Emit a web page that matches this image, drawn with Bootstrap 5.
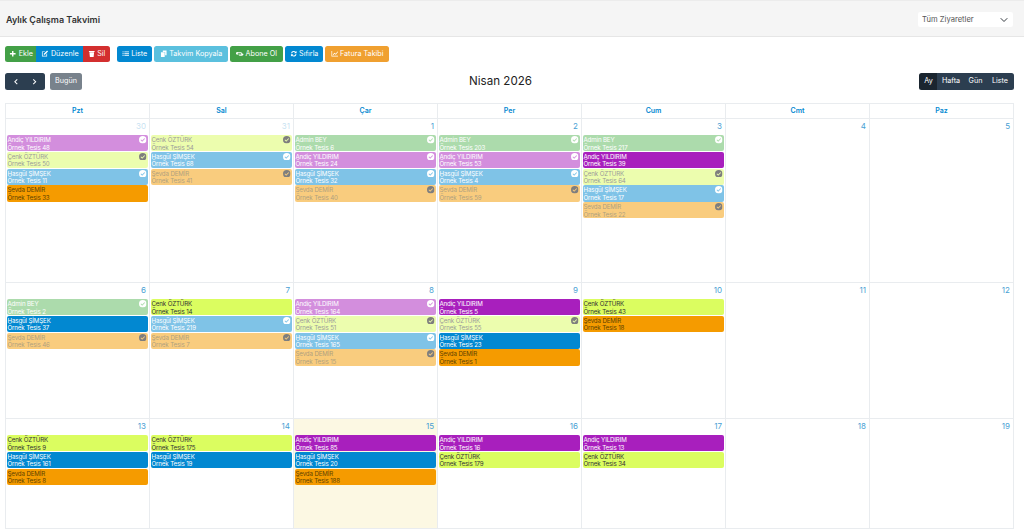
<!DOCTYPE html>
<html lang="tr">
<head>
  <meta charset="UTF-8" />
  <meta name="viewport" content="width=device-width, initial-scale=1" />
  <title>Aylık Çalışma Takvimi</title>
  <link href="https://cdn.jsdelivr.net/npm/bootstrap@5.3.3/dist/css/bootstrap.min.css" rel="stylesheet" />
  <style>
    html, body { height: 531px; overflow: hidden; }
    body { font-family: Inter, "Liberation Sans", sans-serif; background: #fff; color: #333; }
    .top-bar { height: 37px; background: #f5f5f5; border-top: 1px solid #ececec; border-bottom: 1px solid #e6e6e6; padding: 0 11px 0 6px; }
    .top-title { font-size: 9px; font-weight: 600; color: #333; margin: 4px 0 0; }
    .visit-select { width: 95px; height: 15px; min-height: 0; padding: 0 4px; border: 0; border-radius: 2px; font-size: 7.6px; color: #555; background-size: 8px 8px; background-position: right 5px center; margin-top: 2px; }
    .page-body { padding: 9px 10px 0 5px; }
    .tool-row { gap: 2px; height: 16px; }
    .tool-row .btn-group { margin-right: 5px; }
    .tbtn { font-size: 7.2px; font-weight: 400; color: #fff; border: 0; border-radius: 2.5px; height: 16px; padding: 0; display: inline-flex; align-items: center; justify-content: center; gap: 2px; }
    .tbtn svg { width: 7.5px; height: 7.5px; fill: #fff; flex: none; }
    .tbtn:hover { color: #fff; }
    .c-green { background: #43a047; } .c-blue { background: #0288d1; } .c-red { background: #d32f2f; }
    .c-cyan { background: #5bc0de; } .c-orange { background: #f0a030; } .c-navy { background: #2c3e50; } .c-grey { background: #78828c; }
    .c-dark { background: #1a252f; }
    .w-ekle { width: 32px; } .w-duz { width: 48px; } .w-sil { width: 27px; } .w-lis { width: 35px; } .w-kop { width: 74px; }
    .w-abo { width: 53px; } .w-sif { width: 38px; } .w-fat { width: 64px; }
    .cal-head { height: 17px; margin-top: 11px; }
    .cal-head .tbtn { height: 17px; }
    .w-arrow { width: 20.500px; } .w-bug { width: 32px; margin-left: 5px; }
    .w-ay { width: 19px; } .w-haf { width: 28px; } .w-gun { width: 23px; } .w-lst { width: 28px; }
    .cal-title { font-size: 11.6px; font-weight: 400; color: #222; margin: 0; }
    .cal-grid { display: grid; grid-template-columns: repeat(7, 1fr); grid-template-rows: 15px 164px 136px 110px; margin-top: 13px; border-top: 1px solid #e9ecef; border-left: 1px solid #e9ecef; }
    .gh, .gc { border-right: 1px solid #e9ecef; border-bottom: 1px solid #e9ecef; min-width: 0; }
    .gh { font-size: 7px; font-weight: 600; color: #0288d1; text-align: center; line-height: 14px; }
    .gc { padding: 0 1px 0 .5px; }
    .gc-today { background: #fcf8e3; }
    .day-no { font-size: 8px; line-height: 10px; color: #4a9fd4; text-align: right; padding: 2px 2px 4px 0; height: 16px; }
    .day-off { opacity: .3; }
    .ev { position: relative; height: 16.2px; margin-bottom: .6px; border-radius: 2px; font-size: 6.2px; letter-spacing: -.15px; line-height: 7.7px; padding: 1px 1px 0; white-space: nowrap; overflow: hidden; }
    .ev-done { opacity: .5; }
    .ev-and { background: #a81fbd; color: #fff; }
    .ev-cen { background: #dbfd60; color: #333; }
    .ev-has { background: #0288d1; color: #fff; }
    .ev-sev { background: #f59b00; color: #5d4200; }
    .ev-adm { background: #5cb85c; color: #fff; }
    .ev-ok { position: absolute; top: 1px; right: 1.5px; width: 7.5px; height: 7.5px; fill: #fff; }
    .ev-cen .ev-ok, .ev-sev .ev-ok { fill: #000; }
  </style>
</head>
<body>

<svg class="d-none">
  <symbol id="ok" viewBox="0 0 16 16"><path fill-rule="evenodd" d="M8 0a8 8 0 1 1 0 16A8 8 0 0 1 8 0zm3.6 4.6L6.8 9.4 4.6 7.2 3.2 8.6l3.6 3.6 6.2-6.2z"/></symbol>
</svg>

<!-- Ust bar -->
<div class="top-bar d-flex justify-content-between align-items-center">
  <h1 class="top-title">Aylık Çalışma Takvimi</h1>
  <select class="form-select visit-select"><option>Tüm Ziyaretler</option></select>
</div>

<div class="page-body">
  <!-- Araclar -->
  <div class="tool-row d-flex">
    <div class="btn-group">
      <button class="btn tbtn c-green w-ekle"><svg viewBox="0 0 16 16"><path d="M6.5 2h3v4.500H14v3H9.500V14h-3V9.500H2v-3h4.500z"/></svg>Ekle</button>
      <button class="btn tbtn c-blue w-duz"><svg viewBox="0 0 16 16"><path d="M2 3h7L7.500 4.500h-4v8h8v-4L13 7v7H2zM13 1l2 2-7 7H6V8z"/></svg>Düzenle</button>
      <button class="btn tbtn c-red w-sil"><svg viewBox="0 0 16 16"><path d="M2 2h12v2H2zM3 5h10l-1 10H4z"/></svg>Sil</button>
    </div>
    <button class="btn tbtn c-blue w-lis"><svg viewBox="0 0 16 16"><path d="M1 3h2.500v2H1zM5 3h10v2H5zM1 7h2.500v2H1zM5 7h10v2H5zM1 11h2.500v2H1zM5 11h10v2H5z"/></svg>Liste</button>
    <button class="btn tbtn c-cyan w-kop"><svg viewBox="0 0 16 16"><path d="M6 1h8v10h-3V4H6zM2 5h8v10H2z"/></svg>Takvim Kopyala</button>
    <button class="btn tbtn c-green w-abo"><svg viewBox="0 0 16 16"><path fill-rule="evenodd" d="M5 5h5a3.500 3.500 0 0 1 3.300 2.300A3.500 3.500 0 0 1 16 8.500a3.500 3.500 0 0 1-3.500 3.500H8a3.500 3.500 0 0 1-3.300-2.300A3.500 3.500 0 0 1 0 8a3 3 0 0 1 5-3zm0 1.800a1.500 1.500 0 0 0 0 3h5a1.500 1.500 0 0 0 0-3z"/></svg>Abone Ol</button>
    <button class="btn tbtn c-blue w-sif"><svg viewBox="0 0 16 16"><path d="M8 2a6 6 0 0 1 4.200 1.700L14 2v5H9l1.700-1.700A3.700 3.700 0 0 0 4.500 7H2.100A6 6 0 0 1 8 2zM2 9h5l-1.700 1.700A3.700 3.700 0 0 0 11.500 9h2.400A6 6 0 0 1 3.800 12.300L2 14z"/></svg>Sıfırla</button>
    <button class="btn tbtn c-orange w-fat"><svg viewBox="0 0 16 16"><path d="M1 2h1.500v10.500H15V14H1zM4 10l3-4 3 2 4-5 1 1-4.700 6-3-2-2.300 3z"/></svg>Fatura Takibi</button>
  </div>

  <!-- Takvim basligi -->
  <div class="cal-head d-flex justify-content-between align-items-center">
    <div class="d-flex">
      <div class="btn-group">
        <button class="btn tbtn c-navy w-arrow" aria-label="Önceki"><svg viewBox="0 0 16 16"><path d="M10.500 2 12 3.500 7.500 8l4.500 4.500-1.500 1.500-6-6z"/></svg></button>
        <button class="btn tbtn c-navy w-arrow" aria-label="Sonraki"><svg viewBox="0 0 16 16"><path d="M5.500 2 4 3.500 8.500 8 4 12.500 5.500 14l6-6z"/></svg></button>
      </div>
      <button class="btn tbtn c-grey w-bug">Bugün</button>
    </div>
    <h2 class="cal-title">Nisan 2026</h2>
    <div class="btn-group">
      <button class="btn tbtn c-dark w-ay">Ay</button>
      <button class="btn tbtn c-navy w-haf">Hafta</button>
      <button class="btn tbtn c-navy w-gun">Gün</button>
      <button class="btn tbtn c-navy w-lst">Liste</button>
    </div>
  </div>

  <!-- Takvim -->
  <div class="cal-grid">
    <div class="gh">Pzt</div><div class="gh">Sal</div><div class="gh">Çar</div><div class="gh">Per</div><div class="gh">Cum</div><div class="gh">Cmt</div><div class="gh">Paz</div>

    <div class="gc">
      <div class="day-no day-off">30</div>
      <div class="ev ev-and ev-done">Andiç YILDIRIM<br>Örnek Tesis 48<svg class="ev-ok"><use href="#ok"/></svg></div>
      <div class="ev ev-cen ev-done">Cenk ÖZTÜRK<br>Örnek Tesis 50<svg class="ev-ok"><use href="#ok"/></svg></div>
      <div class="ev ev-has ev-done">Hasgül ŞİMŞEK<br>Örnek Tesis 11<svg class="ev-ok"><use href="#ok"/></svg></div>
      <div class="ev ev-sev">Sevda DEMİR<br>Örnek Tesis 33</div>
    </div>
    <div class="gc">
      <div class="day-no day-off">31</div>
      <div class="ev ev-cen ev-done">Cenk ÖZTÜRK<br>Örnek Tesis 54<svg class="ev-ok"><use href="#ok"/></svg></div>
      <div class="ev ev-has ev-done">Hasgül ŞİMŞEK<br>Örnek Tesis 68<svg class="ev-ok"><use href="#ok"/></svg></div>
      <div class="ev ev-sev ev-done">Sevda DEMİR<br>Örnek Tesis 41<svg class="ev-ok"><use href="#ok"/></svg></div>
    </div>
    <div class="gc">
      <div class="day-no">1</div>
      <div class="ev ev-adm ev-done">Admin BEY<br>Örnek Tesis 6<svg class="ev-ok"><use href="#ok"/></svg></div>
      <div class="ev ev-and ev-done">Andiç YILDIRIM<br>Örnek Tesis 24<svg class="ev-ok"><use href="#ok"/></svg></div>
      <div class="ev ev-has ev-done">Hasgül ŞİMŞEK<br>Örnek Tesis 32<svg class="ev-ok"><use href="#ok"/></svg></div>
      <div class="ev ev-sev ev-done">Sevda DEMİR<br>Örnek Tesis 40<svg class="ev-ok"><use href="#ok"/></svg></div>
    </div>
    <div class="gc">
      <div class="day-no">2</div>
      <div class="ev ev-adm ev-done">Admin BEY<br>Örnek Tesis 203<svg class="ev-ok"><use href="#ok"/></svg></div>
      <div class="ev ev-and ev-done">Andiç YILDIRIM<br>Örnek Tesis 53<svg class="ev-ok"><use href="#ok"/></svg></div>
      <div class="ev ev-has ev-done">Hasgül ŞİMŞEK<br>Örnek Tesis 4<svg class="ev-ok"><use href="#ok"/></svg></div>
      <div class="ev ev-sev ev-done">Sevda DEMİR<br>Örnek Tesis 59<svg class="ev-ok"><use href="#ok"/></svg></div>
    </div>
    <div class="gc">
      <div class="day-no">3</div>
      <div class="ev ev-adm ev-done">Admin BEY<br>Örnek Tesis 217<svg class="ev-ok"><use href="#ok"/></svg></div>
      <div class="ev ev-and">Andiç YILDIRIM<br>Örnek Tesis 39</div>
      <div class="ev ev-cen ev-done">Cenk ÖZTÜRK<br>Örnek Tesis 64<svg class="ev-ok"><use href="#ok"/></svg></div>
      <div class="ev ev-has ev-done">Hasgül ŞİMŞEK<br>Örnek Tesis 17<svg class="ev-ok"><use href="#ok"/></svg></div>
      <div class="ev ev-sev ev-done">Sevda DEMİR<br>Örnek Tesis 22<svg class="ev-ok"><use href="#ok"/></svg></div>
    </div>
    <div class="gc"><div class="day-no">4</div></div>
    <div class="gc"><div class="day-no">5</div></div>

    <div class="gc">
      <div class="day-no">6</div>
      <div class="ev ev-adm ev-done">Admin BEY<br>Örnek Tesis 2<svg class="ev-ok"><use href="#ok"/></svg></div>
      <div class="ev ev-has">Hasgül ŞİMŞEK<br>Örnek Tesis 37</div>
      <div class="ev ev-sev ev-done">Sevda DEMİR<br>Örnek Tesis 46<svg class="ev-ok"><use href="#ok"/></svg></div>
    </div>
    <div class="gc">
      <div class="day-no">7</div>
      <div class="ev ev-cen">Cenk ÖZTÜRK<br>Örnek Tesis 14</div>
      <div class="ev ev-has ev-done">Hasgül ŞİMŞEK<br>Örnek Tesis 219<svg class="ev-ok"><use href="#ok"/></svg></div>
      <div class="ev ev-sev ev-done">Sevda DEMİR<br>Örnek Tesis 7<svg class="ev-ok"><use href="#ok"/></svg></div>
    </div>
    <div class="gc">
      <div class="day-no">8</div>
      <div class="ev ev-and ev-done">Andiç YILDIRIM<br>Örnek Tesis 164<svg class="ev-ok"><use href="#ok"/></svg></div>
      <div class="ev ev-cen ev-done">Cenk ÖZTÜRK<br>Örnek Tesis 51<svg class="ev-ok"><use href="#ok"/></svg></div>
      <div class="ev ev-has ev-done">Hasgül ŞİMŞEK<br>Örnek Tesis 165<svg class="ev-ok"><use href="#ok"/></svg></div>
      <div class="ev ev-sev ev-done">Sevda DEMİR<br>Örnek Tesis 15<svg class="ev-ok"><use href="#ok"/></svg></div>
    </div>
    <div class="gc">
      <div class="day-no">9</div>
      <div class="ev ev-and">Andiç YILDIRIM<br>Örnek Tesis 5</div>
      <div class="ev ev-cen ev-done">Cenk ÖZTÜRK<br>Örnek Tesis 55<svg class="ev-ok"><use href="#ok"/></svg></div>
      <div class="ev ev-has">Hasgül ŞİMŞEK<br>Örnek Tesis 23</div>
      <div class="ev ev-sev">Sevda DEMİR<br>Örnek Tesis 1</div>
    </div>
    <div class="gc">
      <div class="day-no">10</div>
      <div class="ev ev-cen">Cenk ÖZTÜRK<br>Örnek Tesis 43</div>
      <div class="ev ev-sev">Sevda DEMİR<br>Örnek Tesis 18</div>
    </div>
    <div class="gc"><div class="day-no">11</div></div>
    <div class="gc"><div class="day-no">12</div></div>

    <div class="gc">
      <div class="day-no">13</div>
      <div class="ev ev-cen">Cenk ÖZTÜRK<br>Örnek Tesis 9</div>
      <div class="ev ev-has">Hasgül ŞİMŞEK<br>Örnek Tesis 161</div>
      <div class="ev ev-sev">Sevda DEMİR<br>Örnek Tesis 8</div>
    </div>
    <div class="gc">
      <div class="day-no">14</div>
      <div class="ev ev-cen">Cenk ÖZTÜRK<br>Örnek Tesis 175</div>
      <div class="ev ev-has">Hasgül ŞİMŞEK<br>Örnek Tesis 19</div>
    </div>
    <div class="gc gc-today">
      <div class="day-no">15</div>
      <div class="ev ev-and">Andiç YILDIRIM<br>Örnek Tesis 85</div>
      <div class="ev ev-has">Hasgül ŞİMŞEK<br>Örnek Tesis 20</div>
      <div class="ev ev-sev">Sevda DEMİR<br>Örnek Tesis 188</div>
    </div>
    <div class="gc">
      <div class="day-no">16</div>
      <div class="ev ev-and">Andiç YILDIRIM<br>Örnek Tesis 16</div>
      <div class="ev ev-cen">Cenk ÖZTÜRK<br>Örnek Tesis 179</div>
    </div>
    <div class="gc">
      <div class="day-no">17</div>
      <div class="ev ev-and">Andiç YILDIRIM<br>Örnek Tesis 13</div>
      <div class="ev ev-cen">Cenk ÖZTÜRK<br>Örnek Tesis 34</div>
    </div>
    <div class="gc"><div class="day-no">18</div></div>
    <div class="gc"><div class="day-no">19</div></div>
  </div>
</div>

<script src="https://cdn.jsdelivr.net/npm/bootstrap@5.3.3/dist/js/bootstrap.bundle.min.js"></script>
</body>
</html>
